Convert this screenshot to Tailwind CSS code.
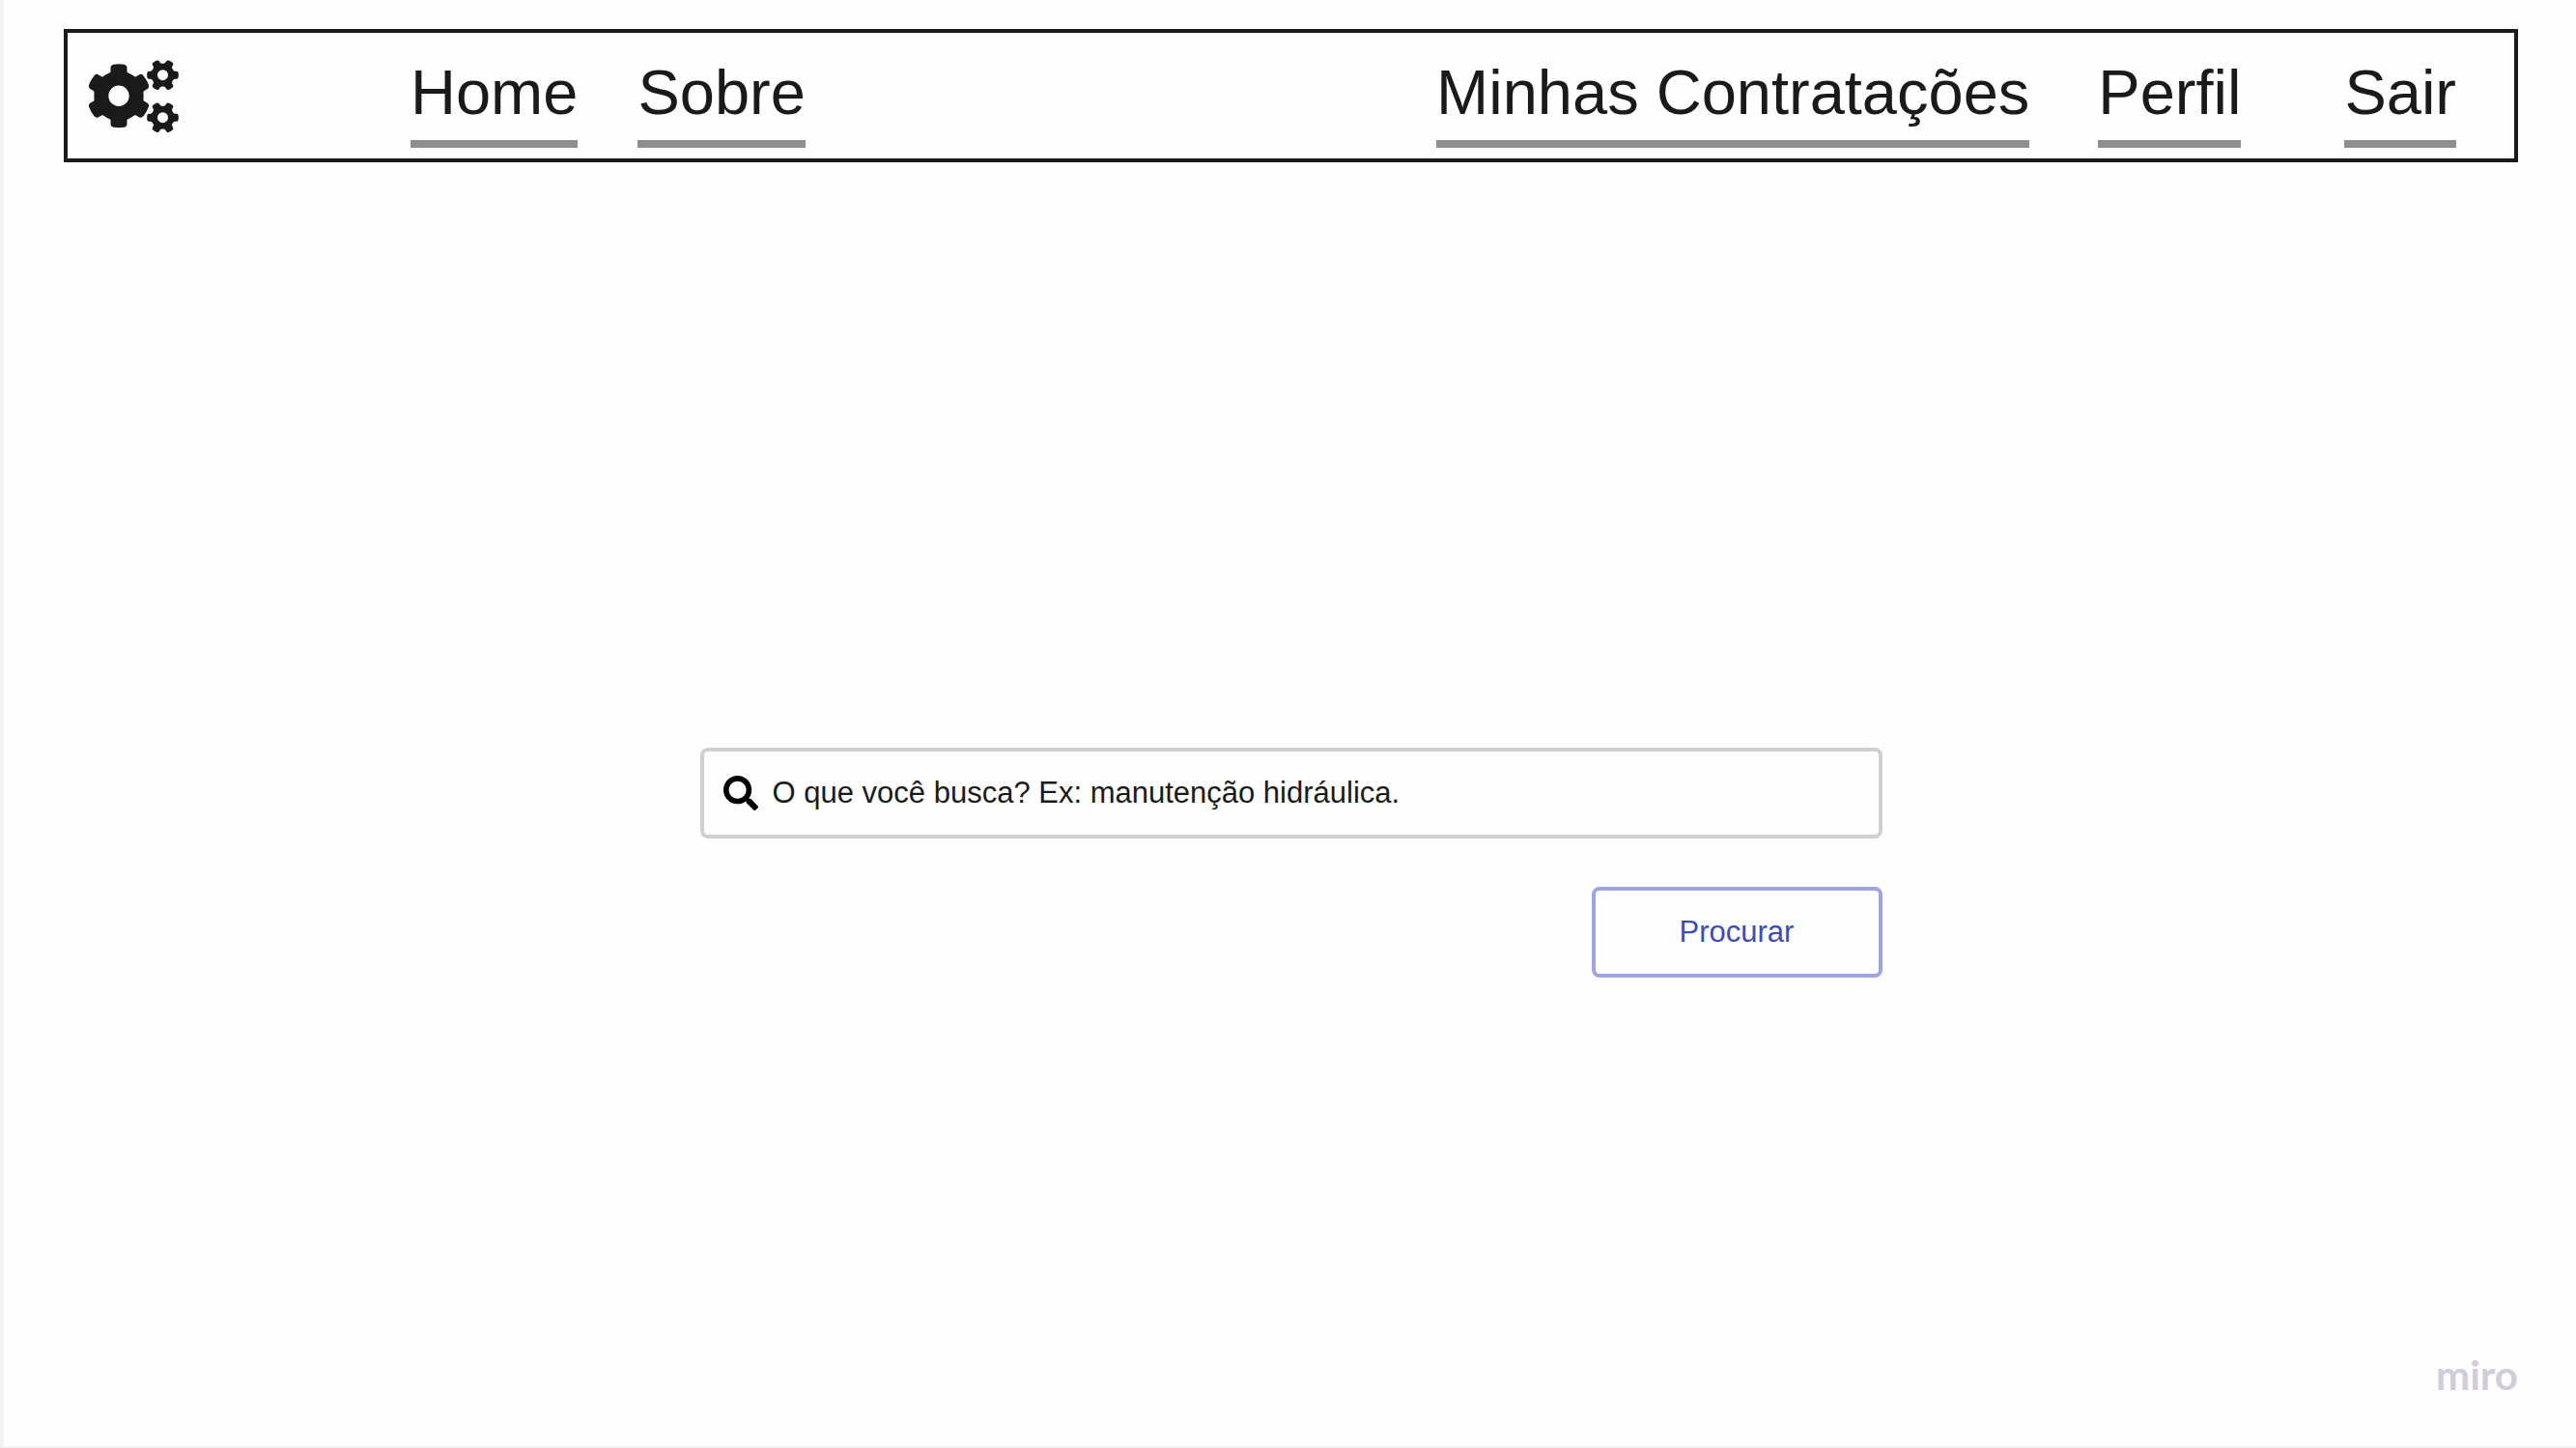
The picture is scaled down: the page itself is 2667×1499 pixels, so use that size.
<!DOCTYPE html>
<html lang="pt-BR">
<head>
<meta charset="utf-8">
<meta name="viewport" content="width=device-width, initial-scale=1">
<title>Busca de serviços</title>
<script src="https://cdn.jsdelivr.net/npm/@tailwindcss/browser@4"></script>
</head>
<body class="flex min-h-screen flex-col border-b-2 border-l-4 border-[#f2f2f2] bg-[#fefefe] pt-[30px] pr-[60px] pl-[62px] font-['Liberation_Sans',Arial,sans-serif] text-[#1a1a1a]">
  <header class="flex items-center border-4 border-[#1a1a1a] pr-[60px] pl-[21px]">
    <a href="#" aria-label="Início" class="mr-[240px] shrink-0">
      <svg class="h-[76px] w-[94px]" viewBox="0 0 94 76" fill="currentColor" aria-hidden="true">
        <defs>
          <path id="tooth" d="M-10.500 -22L-8.500 -25V-29.500Q-8.300 -32 -5.500 -32.500Q0 -33.400 5.500 -32.500Q8.300 -32 8.500 -29.500V-25L10.500 -22V-14H-10.500Z"/>
          <g id="gear">
            <circle r="18.200" fill="none" stroke="currentColor" stroke-width="15"/>
            <use href="#tooth"/>
            <use href="#tooth" transform="rotate(60)"/>
            <use href="#tooth" transform="rotate(120)"/>
            <use href="#tooth" transform="rotate(180)"/>
            <use href="#tooth" transform="rotate(240)"/>
            <use href="#tooth" transform="rotate(300)"/>
          </g>
          <path id="small-tooth" d="M-5.200 -10L-4 -12.500V-14.500Q-3.800 -15.800 -2.500 -16.100Q0 -16.600 2.500 -16.100Q3.800 -15.800 4 -14.500V-12.500L5.200 -10V-7H-5.200Z"/>
          <g id="small-gear">
            <circle r="8.700" fill="none" stroke="currentColor" stroke-width="6.400"/>
            <use href="#small-tooth" transform="rotate(30)"/>
            <use href="#small-tooth" transform="rotate(90)"/>
            <use href="#small-tooth" transform="rotate(150)"/>
            <use href="#small-tooth" transform="rotate(210)"/>
            <use href="#small-tooth" transform="rotate(270)"/>
            <use href="#small-tooth" transform="rotate(330)"/>
          </g>
        </defs>
        <use href="#gear" transform="translate(32 38.300)"/>
        <use href="#small-gear" transform="translate(77.500 16.700)"/>
        <use href="#small-gear" transform="translate(77.500 60.700)"/>
      </svg>
    </a>
    <nav class="flex flex-1 items-center justify-between pt-[26px] pb-[11px] text-[65px] leading-[72px] whitespace-nowrap">
      <div class="flex gap-[62px]">
        <a href="#" class="border-b-8 border-[#8d8d8d] pb-[13px]">Home</a>
        <a href="#" class="border-b-8 border-[#8d8d8d] pb-[13px]">Sobre</a>
      </div>
      <div class="flex">
        <a href="#" class="mr-[71px] border-b-8 border-[#8d8d8d] pb-[13px]">Minhas Contratações</a>
        <a href="#" class="mr-[107px] border-b-8 border-[#8d8d8d] pb-[13px]">Perfil</a>
        <a href="#" class="border-b-8 border-[#8d8d8d] pb-[13px]">Sair</a>
      </div>
    </nav>
  </header>

  <main class="pt-[606px]">
    <form class="mx-auto flex w-full max-w-[1224px] flex-col items-end gap-[50px] text-[31px]">
      <label class="flex h-[94px] w-full items-center gap-[15px] rounded-lg border-4 border-[#cfcfcf] px-[20px]">
        <svg class="size-[36px] shrink-0 text-black" viewBox="0 0 512 512" fill="currentColor" aria-hidden="true">
          <path d="M505 442.700L405.300 343c-4.500-4.500-10.600-7-17-7H372c27.600-35.300 44-79.700 44-128C416 93.100 322.900 0 208 0S0 93.100 0 208s93.100 208 208 208c48.300 0 92.700-16.400 128-44v16.300c0 6.400 2.500 12.500 7 17l99.700 99.700c9.400 9.400 24.600 9.400 33.900 0l28.300-28.300c9.400-9.400 9.400-24.600.1-34zM208 336c-70.700 0-128-57.200-128-128 0-70.700 57.200-128 128-128 70.700 0 128 57.200 128 128 0 70.700-57.200 128-128 128z"/>
        </svg>
        <input type="text" aria-label="O que você busca?" placeholder="O que você busca? Ex: manutenção hidráulica." class="h-full min-w-0 flex-1 bg-transparent outline-none placeholder:text-[#1a1a1a]">
      </label>
      <button type="button" class="h-[94px] w-[301px] rounded-lg border-4 border-[#a0a4dc] text-[#414bb2]">Procurar</button>
    </form>
  </main>

  <footer class="mt-auto flex justify-end pb-[50px] font-['Lato',sans-serif] text-[42px] leading-[48px] font-bold text-[#d0cdd9]">
    <span>miro</span>
  </footer>
</body>
</html>
